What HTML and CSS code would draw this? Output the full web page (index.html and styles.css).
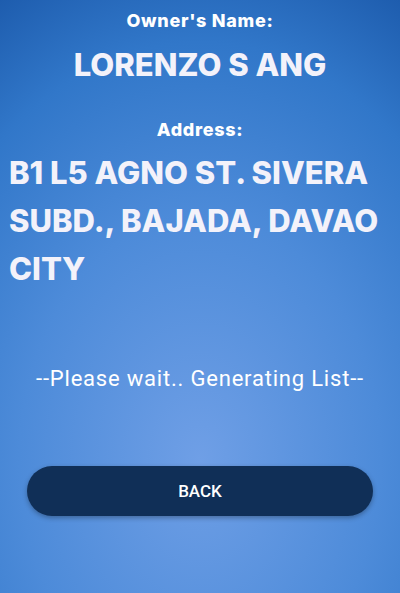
FILE: index.html
```html
<!DOCTYPE html>
<html>
<head>
<meta charset="utf-8">
<link rel="stylesheet" href="styles.css">
</head>
<body>
<main class="page">
  <section class="info">
    <div class="label">Owner's Name:</div>
    <div class="name">LORENZO S ANG</div>
    <div class="label label-address">Address:</div>
    <div class="address">B1 L5 AGNO ST. SIVERA SUBD., BAJADA, DAVAO CITY</div>
  </section>
  <p class="status">--Please wait.. Generating List--</p>
  <div class="actions">
    <button class="back">BACK</button>
  </div>
</main>
</body>
</html>
```
FILE: styles.css
```css
html, body {
  margin: 0;
  padding: 0;
  height: 100%;
}
body {
  background: radial-gradient(ellipse 430px 580px at 200px 460px, #6f9fe6 0%, #4d8bd9 42%, #3177c9 72%, #1652a3 100%);
  color: #fff;
  font-family: "Inter", "Noto Sans", sans-serif;
  overflow: hidden;
}
.page {
  display: flex;
  flex-direction: column;
  padding: 0 9px;
}
.info {
  display: flex;
  flex-direction: column;
}
.label {
  text-align: center;
  font-weight: 800;
  font-size: 18px;
  line-height: 22px;
  letter-spacing: 0.7px;
  margin-top: 10px;
}
.label-address {
  margin-top: 35px;
}
.name {
  text-align: center;
  font-weight: 800;
  font-size: 31px;
  line-height: 38px;
  margin-top: 14px;
  color: #f3f2fa;
}
.address {
  font-weight: 800;
  font-size: 31px;
  line-height: 48px;
  margin-top: 8px;
  color: #f3f2fa;
}
.status {
  font-family: Roboto, sans-serif;
  font-size: 22px;
  letter-spacing: 0.8px;
  text-align: center;
  margin: 73px 0 0;
  line-height: 26px;
}
.actions {
  display: flex;
  justify-content: center;
  margin-top: 74px;
}
.back {
  width: 346px;
  height: 50px;
  border: none;
  border-radius: 25px;
  background: #102f57;
  color: #fff;
  font-family: Roboto, sans-serif;
  font-size: 17px;
  font-weight: 500;
  box-shadow: 0 2px 5px rgba(0, 0, 0, 0.3);
}
```
